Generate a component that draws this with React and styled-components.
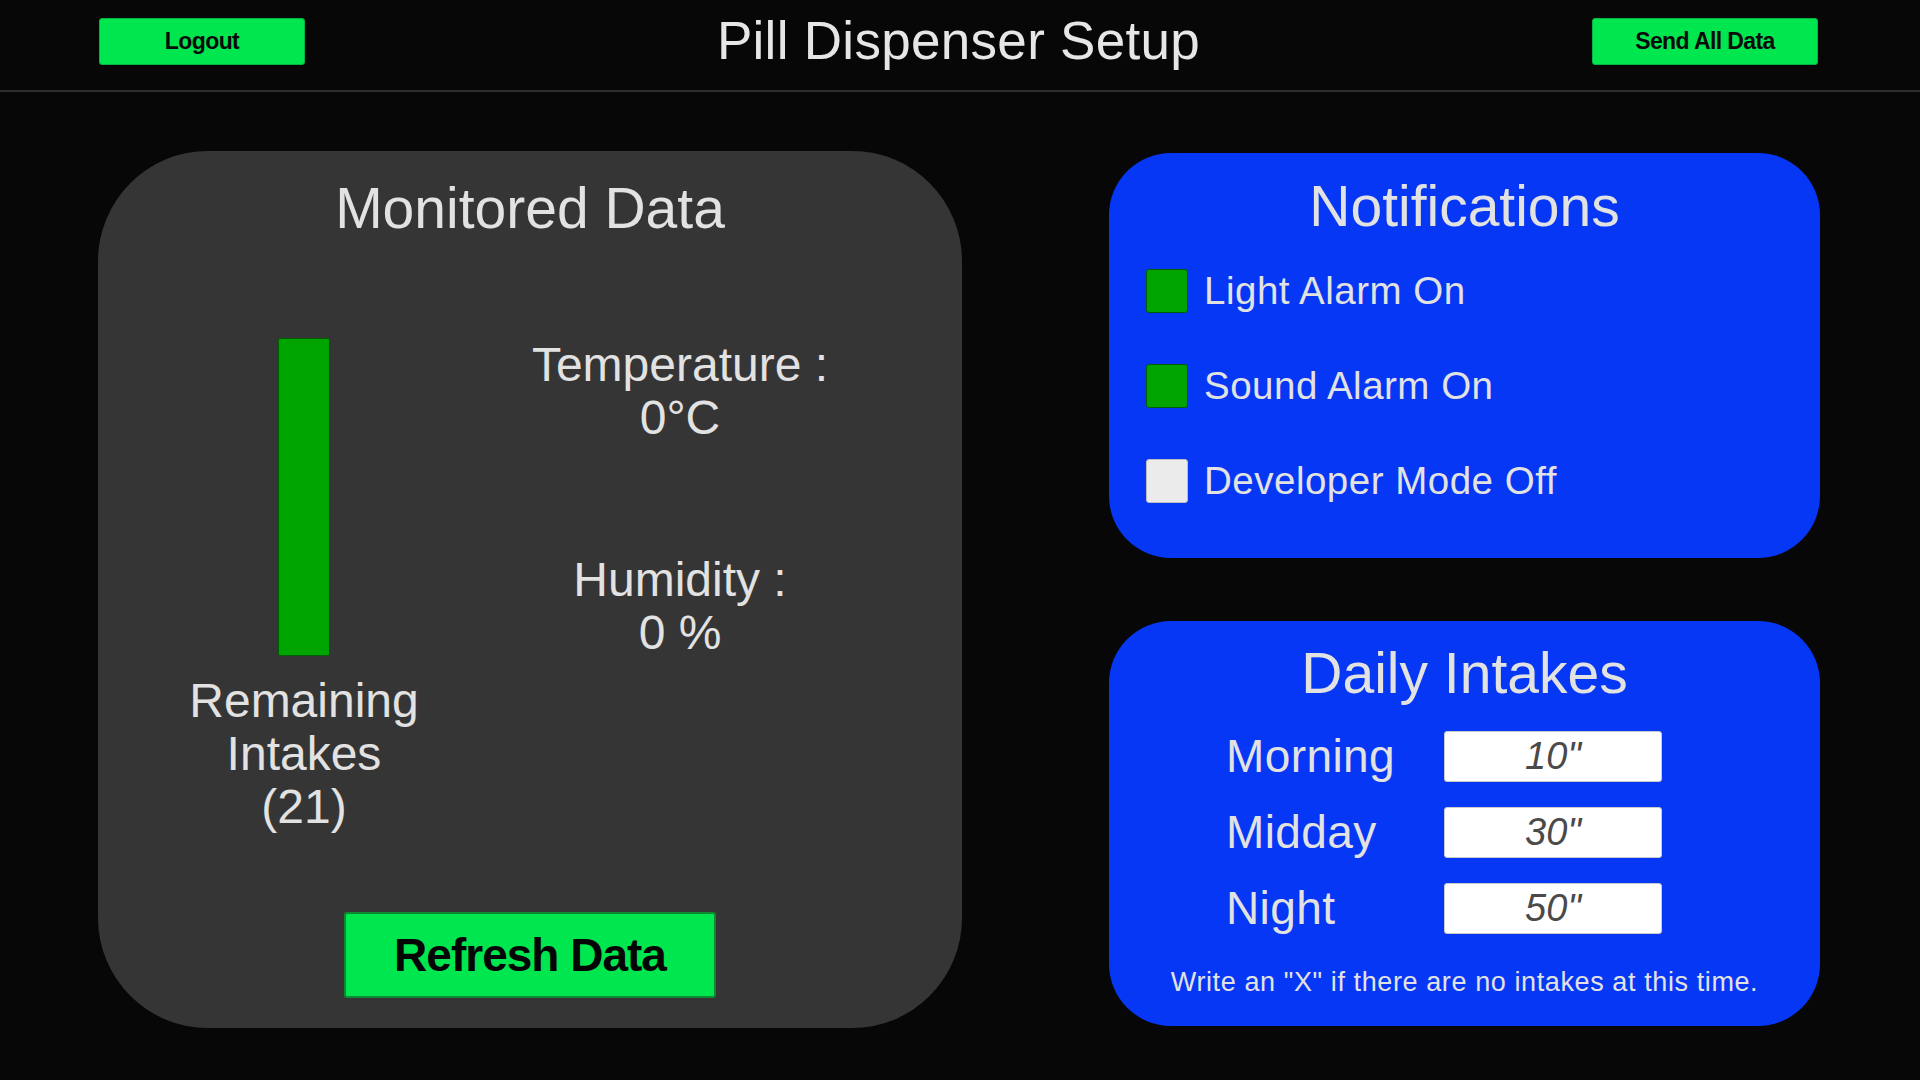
import React from 'react'
import styled, { createGlobalStyle } from 'styled-components'

const GlobalStyle = createGlobalStyle`
    html, body {
        margin: 0;
        padding: 0;
        background: #070707;
    }
    body {
        font-family: "Liberation Sans", Arial, sans-serif;
        color: #e2e2e2;
    }
`

const Screen = styled.div`
    width: 1920px;
    height: 1080px;
    background: #070707;
    overflow: hidden;
    display: flex;
    flex-direction: column;
`

const Header = styled.header`
    height: 90px;
    border-bottom: 2px solid #2c2c2c;
    display: flex;
    align-items: center;
    justify-content: space-between;
    padding: 0 102px 0 99px;
`

const TopButton = styled.button`
    width: ${({ w }) => w}px;
    height: 47px;
    background: #00e64f;
    border: 1px solid #05b540;
    border-radius: 3px;
    color: #0a0a0a;
    font-family: "Liberation Sans", Arial, sans-serif;
    font-weight: bold;
    font-size: 23px;
    letter-spacing: -0.6px;
    padding: 0;
    margin-top: -8px;
`

const Title = styled.h1`
    margin: -10px 0 0 20px;
    font-weight: normal;
    font-size: 53px;
    color: #e6e6e6;
    letter-spacing: 0.3px;
`

const Main = styled.main`
    display: grid;
    grid-template-columns: 864px 711px;
    column-gap: 147px;
    padding: 59px 0 0 98px;
`

const MonitorPanel = styled.section`
    height: 877px;
    background: #353535;
    border-radius: 110px;
    display: flex;
    flex-direction: column;
    align-items: center;
    padding: 24px 0 30px;
    box-sizing: border-box;
`

const PanelTitle = styled.h2`
    margin: 0;
    font-weight: normal;
    font-size: 57px;
    line-height: 66px;
    color: #e2e2e2;
    text-align: center;
`

const MonitorBody = styled.div`
    align-self: stretch;
    display: grid;
    grid-template-columns: 412px 340px;
    margin-top: 97px;
`

const IntakeColumn = styled.div`
    display: flex;
    flex-direction: column;
    align-items: center;
`

const Bar = styled.div`
    width: 50px;
    height: 316px;
    background: #00a400;
    border: 1px solid #005c00;
    border-radius: 2px;
`

const BodyText = styled.div`
    font-size: 48px;
    line-height: 53px;
    text-align: center;
    color: #e2e2e2;
    margin-top: ${({ top }) => top || 0}px;
`

const ReadingsColumn = styled.div`
    display: flex;
    flex-direction: column;
    align-items: center;
`

const RefreshButton = styled.button`
    margin-top: auto;
    width: 372px;
    height: 86px;
    background: #00e64f;
    border: 2px solid #0b8a32;
    border-radius: 3px;
    font-family: "Liberation Sans", Arial, sans-serif;
    font-weight: bold;
    font-size: 46px;
    letter-spacing: -1px;
    color: #050505;
`

const SideColumn = styled.div`
    display: flex;
    flex-direction: column;
    gap: 63px;
    padding-top: 2px;
`

const BluePanel = styled.section`
    height: 405px;
    background: #0537f5;
    border-radius: 62px;
    box-sizing: border-box;
    padding: ${({ pt }) => pt}px 0 0;
    display: flex;
    flex-direction: column;
`

const ToggleList = styled.div`
    display: flex;
    flex-direction: column;
    gap: 51px;
    padding: 30px 0 0 37px;
`

const ToggleRow = styled.div`
    display: flex;
    align-items: center;
    gap: 16px;
`

const Check = styled.span`
    width: 40px;
    height: 42px;
    background: ${({ on }) => (on ? '#00a400' : '#ebebeb')};
    border: 1px solid ${({ on }) => (on ? '#005c00' : '#bdbdbd')};
    border-radius: 3px;
`

const ToggleLabel = styled.span`
    font-size: 38.5px;
    letter-spacing: 0.5px;
    color: #e2e2e2;
`

const IntakeGrid = styled.div`
    display: grid;
    grid-template-columns: 218px 218px;
    row-gap: 22px;
    padding: 23px 0 0 117px;
    align-items: center;
`

const IntakeLabel = styled.span`
    font-size: 46px;
    letter-spacing: 0.4px;
    color: #e2e2e2;
`

const IntakeInput = styled.div`
    height: 51px;
    background: #ffffff;
    border: 1px solid #c9c9c9;
    border-radius: 3px;
    box-sizing: border-box;
    display: flex;
    align-items: center;
    justify-content: center;
    font-style: italic;
    font-size: 38px;
    color: #4a4a4a;
`

const Hint = styled.p`
    margin: 32px 0 0;
    font-size: 27px;
    line-height: 31px;
    letter-spacing: 0.6px;
    text-align: center;
    color: #e2e2e2;
`

const toggles = [
    { label: 'Light Alarm On', on: true },
    { label: 'Sound Alarm On', on: true },
    { label: 'Developer Mode Off', on: false },
]

const intakes = [
    { label: 'Morning', value: '10"' },
    { label: 'Midday', value: '30"' },
    { label: 'Night', value: '50"' },
]

const App = () => {
    return (
        <>
            <GlobalStyle />
            <Screen>
                <Header>
                    <TopButton w={206}>Logout</TopButton>
                    <Title>Pill Dispenser Setup</Title>
                    <TopButton w={226}>Send All Data</TopButton>
                </Header>
                <Main>
                    <MonitorPanel>
                        <PanelTitle>Monitored Data</PanelTitle>
                        <MonitorBody>
                            <IntakeColumn>
                                <Bar />
                                <BodyText top={18}>
                                    Remaining<br />Intakes<br />(21)
                                </BodyText>
                            </IntakeColumn>
                            <ReadingsColumn>
                                <BodyText>Temperature :<br />0°C</BodyText>
                                <BodyText top={109}>Humidity :<br />0 %</BodyText>
                            </ReadingsColumn>
                        </MonitorBody>
                        <RefreshButton>Refresh Data</RefreshButton>
                    </MonitorPanel>
                    <SideColumn>
                        <BluePanel pt={20}>
                            <PanelTitle>Notifications</PanelTitle>
                            <ToggleList>
                                {toggles.map(t => (
                                    <ToggleRow key={t.label}>
                                        <Check on={t.on ? 1 : 0} />
                                        <ToggleLabel>{t.label}</ToggleLabel>
                                    </ToggleRow>
                                ))}
                            </ToggleList>
                        </BluePanel>
                        <BluePanel pt={19}>
                            <PanelTitle>Daily Intakes</PanelTitle>
                            <IntakeGrid>
                                {intakes.map(i => (
                                    <React.Fragment key={i.label}>
                                        <IntakeLabel>{i.label}</IntakeLabel>
                                        <IntakeInput>{i.value}</IntakeInput>
                                    </React.Fragment>
                                ))}
                            </IntakeGrid>
                            <Hint>Write an "X" if there are no intakes at this time.</Hint>
                        </BluePanel>
                    </SideColumn>
                </Main>
            </Screen>
        </>
    )
}

export default App
